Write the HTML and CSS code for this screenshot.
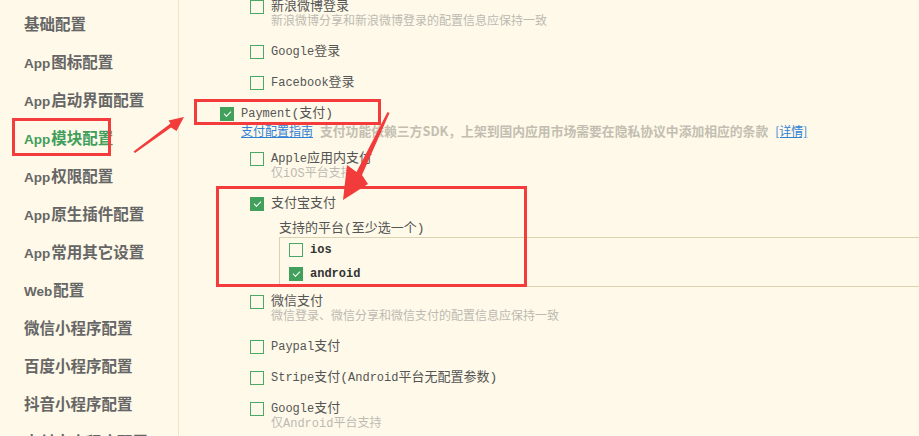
FILE: index.html
```html
<!DOCTYPE html>
<html lang="zh-CN">
<head>
<meta charset="utf-8">
<title>App模块配置</title>
<link rel="stylesheet" href="styles.css">
</head>
<body>
<div class="page">
  <aside class="sidebar">
    <div class="nav-item">基础配置</div>
    <div class="nav-item"><span class="nav-en">App</span>图标配置</div>
    <div class="nav-item"><span class="nav-en">App</span>启动界面配置</div>
    <div class="nav-item active"><span class="nav-en">App</span>模块配置</div>
    <div class="nav-item"><span class="nav-en">App</span>权限配置</div>
    <div class="nav-item"><span class="nav-en">App</span>原生插件配置</div>
    <div class="nav-item"><span class="nav-en">App</span>常用其它设置</div>
    <div class="nav-item"><span class="nav-en">Web</span>配置</div>
    <div class="nav-item">微信小程序配置</div>
    <div class="nav-item">百度小程序配置</div>
    <div class="nav-item">抖音小程序配置</div>
    <div class="nav-item">支付宝小程序配置</div>
  </aside>

  <main class="main">
    <div class="sublist first">
      <div class="item">
        <span class="cb"></span>
        <span class="label">新浪微博登录</span>
        <span class="desc">新浪微博分享和新浪微博登录的配置信息应保持一致</span>
      </div>
      <div class="item">
        <span class="cb"></span>
        <span class="label"><span class="en">Google</span>登录</span>
      </div>
      <div class="item">
        <span class="cb"></span>
        <span class="label"><span class="en">Facebook</span>登录</span>
      </div>
    </div>

    <div class="group">
      <div class="item head">
        <span class="cb checked"></span>
        <span class="label"><span class="en">Payment</span>(支付)</span>
        <span class="linkline"><a class="link">支付配置指南</a><span class="note">支付功能依赖三方SDK，上架到国内应用市场需要在隐私协议中添加相应的条款</span><a class="link more">[详情]</a></span>
      </div>
      <div class="sublist pay">
        <div class="item">
          <span class="cb"></span>
          <span class="label"><span class="en">Apple</span>应用内支付</span>
          <span class="desc">仅<span class="en-d">iOS</span>平台支持</span>
        </div>
        <div class="item alipay">
          <span class="cb checked"></span>
          <span class="label">支付宝支付</span>
          <div class="platforms">
            <div class="pf-title">支持的平台(至少选一个)</div>
            <div class="pf-box">
              <div class="pf-row"><span class="cb"></span><span class="pf-label">ios</span></div>
              <div class="pf-row"><span class="cb checked"></span><span class="pf-label">android</span></div>
            </div>
          </div>
        </div>
        <div class="item">
          <span class="cb"></span>
          <span class="label">微信支付</span>
          <span class="desc">微信登录、微信分享和微信支付的配置信息应保持一致</span>
        </div>
        <div class="item">
          <span class="cb"></span>
          <span class="label"><span class="en">Paypal</span>支付</span>
        </div>
        <div class="item">
          <span class="cb"></span>
          <span class="label"><span class="en">Stripe</span>支付(<span class="en">Android</span>平台无配置参数)</span>
        </div>
        <div class="item">
          <span class="cb"></span>
          <span class="label"><span class="en">Google</span>支付</span>
          <span class="desc">仅<span class="en-d">Android</span>平台支持</span>
        </div>
      </div>
    </div>
  </main>

  <div class="mark mark-nav"></div>
  <div class="mark mark-pay"></div>
  <div class="mark mark-alipay"></div>
  <svg class="arrows" width="919" height="436" viewBox="0 0 919 436">
    <polygon points="133.5,151.5 135,153 171,127.5 176.5,131 184,117 168.5,120.5 170.5,123.5" fill="#f23c3c"/>
    <polygon points="387.5,112 389.5,113 362,175 368,184 343,200 347,165 356.5,172" fill="#f23c3c"/>
  </svg>
</div>
</body>
</html>
```

FILE: styles.css
```css
html, body {
  margin: 0;
  padding: 0;
}
body {
  background: #fef9e8;
  overflow: hidden;
}
.page {
  position: relative;
  width: 919px;
  height: 436px;
  overflow: hidden;
  display: flex;
  background: #fef9e8;
}
.sidebar {
  width: 178px;
  flex: none;
  border-right: 1px solid #efe6c9;
  padding-top: 4px;
  box-sizing: content-box;
}
.nav-item {
  height: 38px;
  line-height: 38px;
  padding-left: 24px;
  font-family: "Noto Sans CJK SC", "Noto Sans", sans-serif;
  font-weight: bold;
  font-size: 15.5px;
  color: #666666;
  white-space: nowrap;
}
.nav-en {
  font-family: "Liberation Sans", sans-serif;
  font-size: 13.5px;
  margin-right: 1px;
}
.nav-item.active {
  color: #3f9e5c;
}
.main {
  flex: 1;
  min-width: 0;
  padding-left: 41px;
}
.sublist {
  padding-left: 30px;
}
.sublist.first {
  margin-top: -8px;
}
.item {
  display: grid;
  grid-template-columns: 14px 1fr;
  column-gap: 7px;
  padding: 7px 0 8px;
}
.cb {
  grid-column: 1;
  grid-row: 1;
  width: 14px;
  height: 14px;
  box-sizing: border-box;
  border: 1px solid #4da767;
  margin-top: 1px;
  position: relative;
}
.cb.checked {
  background: #40a05c;
  border-color: #40a05c;
}
.cb.checked::after {
  content: "";
  position: absolute;
  left: 3px;
  top: 3px;
  width: 6px;
  height: 3px;
  border-left: 1.5px solid #ffffff;
  border-bottom: 1.5px solid #ffffff;
  transform: rotate(-45deg);
}
.label {
  grid-column: 2;
  grid-row: 1;
  font-family: "Liberation Mono", "Noto Sans CJK SC", monospace;
  font-size: 13px;
  line-height: 16px;
  color: #555555;
  white-space: nowrap;
}
.en {
  font-size: 12px;
}
.desc {
  grid-column: 2;
  font-family: "Liberation Mono", "Noto Sans CJK SC", monospace;
  font-size: 12px;
  line-height: 14px;
  color: #bdbab2;
  white-space: nowrap;
}
.en-d {
  font-size: 12px;
}
.linkline {
  grid-column: 2;
  line-height: 14px;
  white-space: nowrap;
  font-family: "Noto Sans CJK SC", sans-serif;
}
.link {
  color: #2f80d6;
  text-decoration: underline;
  font-size: 12px;
}
.note {
  font-size: 12.8px;
  font-weight: bold;
  color: #c3beb1;
  margin-left: 7px;
}
.more {
  margin-left: 7px;
}
.item.head {
  padding-bottom: 6px;
}
.item.alipay {
  padding-bottom: 0;
}
.platforms {
  grid-column: 2;
  margin-left: 8px;
  margin-right: -20px;
}
.pf-title {
  margin-top: 9px;
  font-family: "Liberation Mono", "Noto Sans CJK SC", monospace;
  font-size: 13px;
  line-height: 16px;
  color: #555555;
  white-space: nowrap;
}
.pf-box {
  border-top: 1px solid #dcd2b1;
  border-bottom: 1px solid #dcd2b1;
  border-left: 1px solid #dcd2b1;
  padding-left: 9px;
}
.pf-row {
  height: 24px;
  display: flex;
  align-items: center;
  gap: 7px;
}
.pf-row .cb {
  margin-top: 0;
}
.pf-label {
  font-family: "Liberation Mono", monospace;
  font-size: 12px;
  color: #333333;
  font-weight: bold;
}
.mark {
  position: absolute;
  border: 3px solid #f43c3c;
  box-sizing: border-box;
}
.mark-nav {
  left: 12px;
  top: 118px;
  width: 99px;
  height: 38px;
}
.mark-pay {
  left: 194px;
  top: 99px;
  width: 187px;
  height: 26px;
}
.mark-alipay {
  left: 216px;
  top: 186px;
  width: 311px;
  height: 101px;
}
.arrows {
  position: absolute;
  left: 0;
  top: 0;
  pointer-events: none;
}
```
